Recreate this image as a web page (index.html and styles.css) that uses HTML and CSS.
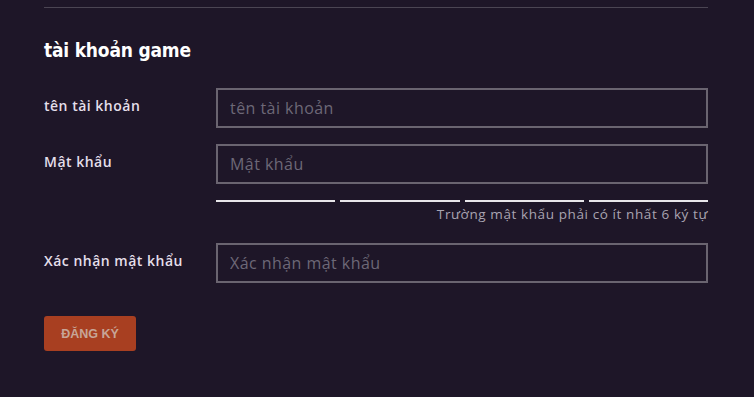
FILE: index.html
```html
<!DOCTYPE html>
<html lang="vi">
<head>
    <meta charset="UTF-8">
    <title>Tài khoản game</title>
    <link rel="stylesheet" href="styles.css">
</head>
<body>
    <div class="panel">
        <h2 class="panel-title">tài khoản game</h2>

        <div class="field">
            <label for="username">tên tài khoản</label>
            <input type="text" id="username" placeholder="tên tài khoản">
        </div>

        <div class="field">
            <label for="password">Mật khẩu</label>
            <div class="field-body">
                <input type="password" id="password" placeholder="Mật khẩu">
                <div class="strength">
                    <span></span><span></span><span></span><span></span>
                </div>
                <div class="hint">Trường mật khẩu phải có ít nhất 6 ký tự</div>
            </div>
        </div>

        <div class="field">
            <label for="confirm">Xác nhận mật khẩu</label>
            <input type="password" id="confirm" placeholder="Xác nhận mật khẩu">
        </div>

        <button class="submit">ĐĂNG KÝ</button>
    </div>
</body>
</html>
```

FILE: styles.css
```css
body {
    margin: 0;
    background-color: #1e1628;
    font-family: 'Open Sans', 'Noto Sans', sans-serif;
}

.panel {
    margin: 7px 46px 0 44px;
    border-top: 1px solid #4b4553;
    padding-top: 31px;
}

.panel-title {
    margin: 0 0 27px 0;
    font-family: 'DejaVu Sans Condensed', 'DejaVu Sans', sans-serif;
    font-size: 19px;
    font-weight: bold;
    color: #ffffff;
    line-height: 22px;
    letter-spacing: -0.2px;
}

.field {
    display: grid;
    grid-template-columns: 172px 1fr;
    margin-bottom: 16px;
}

.field label {
    color: #e4dfea;
    font-size: 14px;
    font-weight: 600;
    letter-spacing: 0.5px;
    padding-top: 8px;
}

.field input {
    box-sizing: border-box;
    width: 100%;
    height: 40px;
    border: 2px solid #6a6470;
    background-color: #1e1628;
    color: #e4dfea;
    padding: 0 12px;
    font-family: 'Open Sans', 'Noto Sans', sans-serif;
    font-size: 16px;
    letter-spacing: 0.45px;
    outline: none;
}

.field input::placeholder {
    color: #6d6877;
}

.strength {
    display: flex;
    gap: 5px;
    margin-top: 16px;
}

.strength span {
    flex: 1;
    height: 2px;
    background-color: #e8e6ea;
}

.hint {
    text-align: right;
    color: #a9a4b1;
    font-size: 13.5px;
    letter-spacing: 0.6px;
    margin-top: 3px;
    margin-bottom: 4px;
}

.submit {
    margin-top: 17px;
    width: 92px;
    height: 35px;
    border: none;
    border-radius: 3px;
    background-color: #a83f21;
    color: #c7a597;
    font-family: 'Liberation Sans', Arial, sans-serif;
    font-weight: bold;
    font-size: 12.5px;
    cursor: pointer;
}
```
